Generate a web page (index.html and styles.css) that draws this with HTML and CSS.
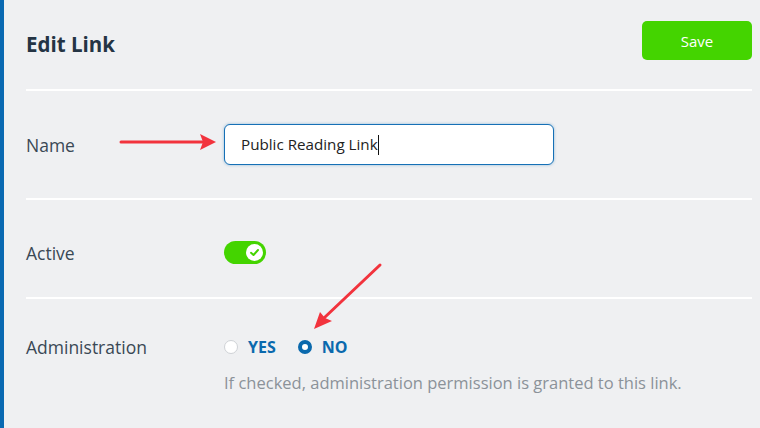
FILE: index.html
```html
<!DOCTYPE html>
<html lang="en">

<head>
    <meta charset="UTF-8">
    <meta name="viewport" content="width=device-width, initial-scale=1.0">
    <title>Edit Link</title>
    <link rel="stylesheet" href="styles.css">
</head>

<body>
    <div class="panel">
        <div class="header">
            <h1>Edit Link</h1>
            <button class="save-btn">Save</button>
        </div>

        <div class="row row-name">
            <label class="row-label" for="nameInput">Name</label>
            <div class="field">
                <div class="text-input" id="nameInput">Public Reading Link<span class="caret"></span></div>
            </div>
        </div>

        <div class="row row-active">
            <span class="row-label">Active</span>
            <div class="field">
                <span class="toggle">
                    <span class="knob">
                        <svg width="11" height="11" viewBox="0 0 11 11">
                            <path d="M2 5.8 L4.5 8 L9 3" fill="none" stroke="#44d400" stroke-width="2" stroke-linecap="round" stroke-linejoin="round" />
                        </svg>
                    </span>
                </span>
            </div>
        </div>

        <div class="row row-admin">
            <span class="row-label">Administration</span>
            <div class="field">
                <div class="radios">
                    <span class="radio"><span class="dot"></span>YES</span>
                    <span class="radio checked"><span class="dot"></span>NO</span>
                </div>
                <p class="help">If checked, administration permission is granted to this link.</p>
            </div>
        </div>
    </div>

    <!-- annotation arrows -->
    <svg class="arrows" width="760" height="428" viewBox="0 0 760 428">
        <line x1="121" y1="142" x2="203" y2="142" stroke="#f2333d" stroke-width="3" stroke-linecap="round" />
        <polygon points="216,142 200,134 203,142 200,150" fill="#f2333d" />
        <line x1="380" y1="265" x2="324" y2="318" stroke="#f2333d" stroke-width="3" stroke-linecap="round" />
        <polygon points="314,329 320,312 325,318 332,321" fill="#f2333d" />
    </svg>
</body>

</html>
```

FILE: styles.css
```css
body {
    margin: 0;
    font-family: "Open Sans", "Liberation Sans", sans-serif;
    background-color: #eff0f2;
    color: #3a4855;
}

.panel {
    height: 428px;
    border-left: 4px solid #0a69b2;
    padding: 0 8px 0 22px;
}

.header {
    display: flex;
    justify-content: space-between;
    align-items: flex-start;
    height: 89px;
    border-bottom: 2px solid #fff;
}

.header h1 {
    margin: 30px 0 0;
    font-size: 20.5px;
    line-height: 28px;
    font-weight: 700;
    color: #243444;
}

.save-btn {
    margin-top: 21px;
    width: 110px;
    height: 39px;
    border: none;
    border-radius: 5px;
    background-color: #44d400;
    color: #fff;
    font-family: inherit;
    font-size: 15px;
}

.row {
    display: grid;
    grid-template-columns: 198px 1fr;
    align-items: center;
    border-bottom: 2px solid #fff;
}

.row-label {
    font-size: 17.5px;
    line-height: 22px;
}

.row-name {
    padding: 33px 0 33px;
}

.text-input {
    box-sizing: border-box;
    width: 330px;
    height: 41px;
    padding: 0 16px;
    border: 1px solid #1670b6;
    border-radius: 6px;
    background: #fff;
    box-shadow: 0 0 3px rgba(22, 112, 182, 0.45);
    font-size: 15.2px;
    line-height: 39px;
    color: #222;
}

.caret {
    display: inline-block;
    width: 1px;
    height: 20px;
    background: #111;
    vertical-align: -5px;
}

.row-active {
    padding: 41px 0 33px;
}

.toggle {
    display: flex;
    justify-content: flex-end;
    align-items: center;
    box-sizing: border-box;
    width: 42px;
    height: 23px;
    padding-right: 3px;
    border-radius: 12px;
    background: #44d400;
}

.knob {
    display: flex;
    align-items: center;
    justify-content: center;
    width: 17px;
    height: 17px;
    border-radius: 50%;
    background: #fff;
}

.row-admin {
    align-items: start;
    border-bottom: none;
    padding-top: 37px;
}

.radios {
    display: flex;
    gap: 22px;
    height: 22px;
    align-items: center;
}

.radio {
    display: flex;
    align-items: center;
    gap: 10px;
    font-size: 16px;
    font-weight: 700;
    color: #0a69ad;
}

.dot {
    box-sizing: border-box;
    width: 14px;
    height: 14px;
    border-radius: 50%;
    border: 1px solid #cfd2d6;
    background: #fff;
}

.radio.checked .dot {
    border: 4px solid #0a69ad;
}

.help {
    margin: 14px 0 0;
    font-size: 16.5px;
    line-height: 22px;
    color: #8b9299;
}

.arrows {
    position: absolute;
    left: 0;
    top: 0;
    pointer-events: none;
}
```
